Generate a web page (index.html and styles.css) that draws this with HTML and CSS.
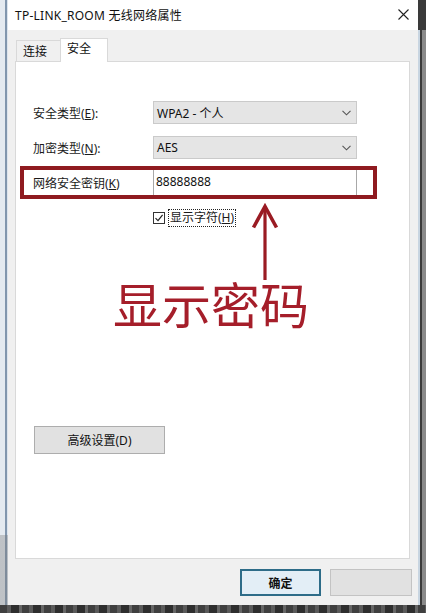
FILE: index.html
```html
<!DOCTYPE html>
<html lang="zh-CN">
<head>
<meta charset="utf-8">
<title>TP-LINK_ROOM 无线网络属性</title>
<link rel="stylesheet" href="styles.css">
</head>
<body>
<div class="screen">
  <div class="desk">
    <div class="leftwin"></div>
    <div class="dialog">
      <div class="titlebar">
        <span class="title">TP-LINK_ROOM 无线网络属性</span>
        <svg class="close" width="11" height="11" viewBox="0 0 11 11"><path d="M0.5 0.5L10.5 10.5M10.5 0.5L0.5 10.5" stroke="#222" stroke-width="1.1" fill="none"/></svg>
      </div>
      <div class="client">
        <div class="tabs">
          <div class="tab">连接</div>
          <div class="tab active">安全</div>
        </div>
        <div class="panel">
          <div class="row">
            <span class="label">安全类型(<u>E</u>):</span>
            <div class="combo"><span>WPA2 - 个人</span><svg class="chev" width="9" height="6" viewBox="0 0 9 6"><path d="M0.5 0.8L4.5 4.8L8.5 0.8" stroke="#555" stroke-width="1.1" fill="none"/></svg></div>
          </div>
          <div class="row row2">
            <span class="label">加密类型(<u>N</u>):</span>
            <div class="combo"><span>AES</span><svg class="chev" width="9" height="6" viewBox="0 0 9 6"><path d="M0.5 0.8L4.5 4.8L8.5 0.8" stroke="#555" stroke-width="1.1" fill="none"/></svg></div>
          </div>
          <div class="keyrow">
            <span class="label">网络安全密钥(<u>K</u>)</span>
            <div class="keyinput">88888888</div>
          </div>
          <div class="checkrow">
            <span class="checkbox"><svg width="10" height="10" viewBox="0 0 10 10"><path d="M1.5 5.2L4 7.7L8.6 1.8" stroke="#222" stroke-width="1.2" fill="none"/></svg></span>
            <span class="focus">显示字符(<u>H</u>)</span>
          </div>
          <svg class="arrow" width="30" height="80" viewBox="0 0 30 80"><path d="M14 4V77" stroke="#9a1b23" stroke-width="3.2" fill="none"/><path d="M2.5 24.5L14 3.5L25.5 24.5" stroke="#9a1b23" stroke-width="3.6" fill="none" stroke-linejoin="miter"/></svg>
          <div class="bigtext">显示密码</div>
          <div class="btn adv">高级设置(D)</div>
        </div>
        <div class="buttons">
          <div class="btn ok">确定</div>
          <div class="btn cancel"></div>
        </div>
      </div>
    </div>
    <div class="rightstrip"></div>
  </div>
  <div class="floor"></div>
</div>
</body>
</html>
```
FILE: styles.css
```css
* { box-sizing: border-box; }
html, body { margin: 0; padding: 0; }
body {
  width: 426px;
  height: 613px;
  overflow: hidden;
  font-family: "Noto Sans", "Noto Sans CJK SC", sans-serif;
  font-size: 12px;
  color: #1a1a1a;
  background: #444;
}
.screen { width: 426px; height: 613px; display: flex; flex-direction: column; }
.desk { height: 605px; display: flex; }
.leftwin {
  width: 8px;
  background:
    linear-gradient(to bottom, transparent 0 535px, rgba(120,120,120,0.35) 535px),
    linear-gradient(to right, #e4eaf0 0 5px, #8196ad 5px 7px, #dce5ee 7px 8px);
}
.dialog {
  width: 410px;
  display: flex;
  flex-direction: column;
  background: #f0f0f0;
}
.titlebar {
  height: 30px;
  background: #fff;
  display: flex;
  align-items: center;
  justify-content: space-between;
  padding: 0 9px 0 7px;
}
.title { font-size: 12px; color: #111; letter-spacing: 0.25px; }
.close { display: block; margin-top: -1px; }
.client {
  flex: 1;
  display: flex;
  flex-direction: column;
  padding: 8px 8px 0 7px;
}
.tabs { height: 24px; display: flex; align-items: flex-end; padding-left: 1px; margin-bottom: -1px; }
.tab {
  height: 22px;
  width: 44px;
  border: 1px solid #d9d9d9;
  border-bottom: none;
  border-right: none;
  padding-left: 6px;
  line-height: 21px;
  background: #f0f0f0;
  color: #111;
}
.tab.active {
  height: 24px;
  width: 48px;
  border-right: 1px solid #d9d9d9;
  background: #fff;
  padding-left: 6px;
  line-height: 20px;
  position: relative;
  z-index: 1;
}
.panel {
  height: 498px;
  border: 1px solid #d9d9d9;
  background: #fff;
  position: relative;
  padding-top: 39px;
  display: flex;
  flex-direction: column;
}
.row { display: flex; align-items: center; margin-left: 17px; height: 23px; }
.row2 { margin-top: 12px; }
.label { width: 120px; flex: none; color: #1a1a1a; }
.combo {
  width: 204px;
  height: 23px;
  background: #e5e5e5;
  border: 1px solid #cacaca;
  display: flex;
  align-items: center;
  justify-content: space-between;
  padding: 0 5px 0 3px;
  color: #111;
}
.chev { display: block; }
.keyrow {
  margin-top: 7px;
  margin-left: 4px;
  width: 357px;
  height: 33px;
  border: 4px solid #8f1a20;
  padding-left: 9px;
  display: flex;
  align-items: center;
}
.keyinput {
  width: 204px;
  height: 25px;
  border-left: 1px solid #a8a8a8;
  border-right: 1px solid #a8a8a8;
  padding-left: 2px;
  line-height: 23px;
  color: #111;
}
.checkrow { margin-top: 10px; margin-left: 137px; height: 18px; display: flex; align-items: center; }
.checkbox {
  width: 12px;
  height: 12px;
  border: 1px solid #333;
  background: #fff;
  display: flex;
  align-items: center;
  justify-content: center;
  margin-right: 3px;
}
.checkbox svg { display: block; }
.focus {
  height: 18px;
  border: 1px dotted #222;
  padding: 0 1px;
  line-height: 16px;
}
.arrow { position: absolute; left: 235px; top: 141px; }
.bigtext {
  margin-top: 51px;
  margin-left: 97px;
  font-family: "Noto Sans CJK SC", sans-serif;
  font-size: 49px;
  line-height: 49px;
  height: 49px;
  color: #a51e2a;
  font-weight: 400;
}
.btn {
  display: flex;
  align-items: center;
  justify-content: center;
  color: #111;
}
.adv {
  margin-top: 99px;
  margin-left: 18px;
  width: 131px;
  height: 28px;
  background: #e1e1e1;
  border: 1px solid #adadad;
}
.buttons {
  display: flex;
  justify-content: flex-end;
  gap: 9px;
  margin-top: 10px;
  margin-right: -2px;
}
.ok {
  width: 81px;
  height: 27px;
  border: 2px solid #2e6c88;
  background: #e3eef6;
  font-weight: 600;
}
.cancel {
  width: 82px;
  height: 27px;
  border: 1px solid #c3c3c3;
  background: #e1e1e1;
}
.rightstrip {
  width: 8px;
  background: linear-gradient(to bottom, #3a3a3a 0 30px, transparent 30px), linear-gradient(to right, #c8d5e1 0 2px, #3b3b3b 2px 4px, #8a8a8a 4px);
}
.floor {
  height: 8px;
  background: repeating-linear-gradient(to right, #3f3f3f 0 7px, #5a5a5a 7px 11px, #2e2e2e 11px 19px, #656565 19px 22px);
}
```
